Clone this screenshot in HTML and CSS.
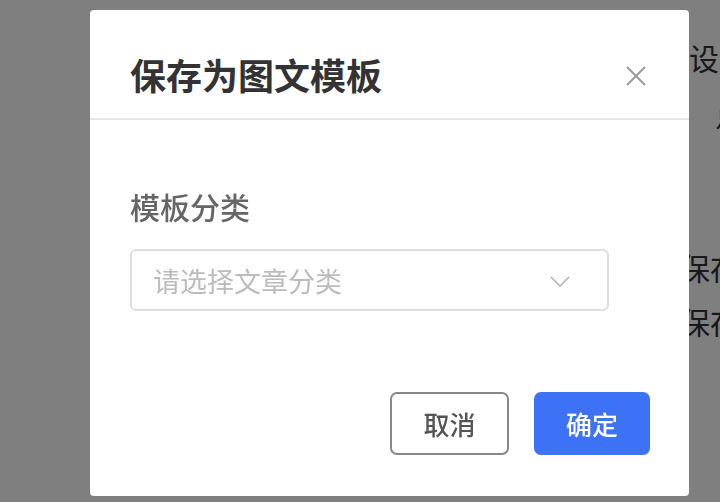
FILE: index.html
```html
<!DOCTYPE html>
<html lang="zh-CN">
<head>
    <meta charset="UTF-8">
    <meta name="viewport" content="width=device-width, initial-scale=1.0">
    <title>保存为图文模板</title>
    <link rel="stylesheet" href="styles.css">
</head>
<body>
    <div class="page">
        <div class="page-line line-1">基础设置</div>
        <div class="page-line line-2">点击</div>
        <div class="page-line line-3">保存</div>
        <div class="page-line line-4">保存</div>
    </div>

    <div class="mask"></div>

    <div class="dialog">
        <div class="dialog-header">
            <h2 class="dialog-title">保存为图文模板</h2>
            <span class="dialog-close">
                <svg width="20" height="20" viewBox="0 0 20 20">
                    <path d="M1 1 L19 19 M19 1 L1 19" stroke="#9a9a9a" stroke-width="2" fill="none"/>
                </svg>
            </span>
        </div>

        <div class="dialog-body">
            <div class="form-label">模板分类</div>
            <div class="select">
                <span class="select-placeholder">请选择文章分类</span>
                <svg class="select-arrow" width="20" height="11" viewBox="0 0 20 11">
                    <path d="M1 1 L10 10 L19 1" stroke="#b4b4b4" stroke-width="1.6" fill="none"/>
                </svg>
            </div>
        </div>

        <div class="dialog-footer">
            <button class="btn btn-cancel">取消</button>
            <button class="btn btn-primary">确定</button>
        </div>
    </div>
</body>
</html>
```

FILE: styles.css
```css
* {
    margin: 0;
    padding: 0;
    box-sizing: border-box;
    font-family: "Noto Sans CJK SC", "Noto Sans", sans-serif;
}

html, body {
    width: 720px;
    height: 502px;
    overflow: hidden;
}

body {
    background: #fff;
    color: #333;
}

/* page behind the dialog */
.page {
    padding-top: 42px;
}

.page-line {
    font-size: 30px;
    line-height: 30px;
    color: #333;
    white-space: nowrap;
}

.line-1 {
    margin-left: 629px;
}

.line-2 {
    margin-left: 715px;
    margin-top: 26px;
}

.line-3 {
    margin-left: 680px;
    margin-top: 124px;
}

.line-4 {
    margin-left: 680px;
    margin-top: 24px;
}

.mask {
    position: fixed;
    left: 0;
    top: 0;
    right: 0;
    bottom: 0;
    background: rgba(0, 0, 0, 0.5);
}

.dialog {
    position: fixed;
    left: 90px;
    top: 10px;
    width: 599px;
    height: 486px;
    background: #fff;
    border-radius: 4px;
    display: flex;
    flex-direction: column;
}

.dialog-header {
    display: flex;
    align-items: center;
    justify-content: space-between;
    padding: 46px 43px 26px 40px;
    border-bottom: 2px solid #e6e6e6;
}

.dialog-title {
    font-size: 36px;
    line-height: 36px;
    font-weight: bold;
    color: #333;
}

.dialog-close {
    display: flex;
    margin-top: 4px;
}

.dialog-body {
    padding: 71px 80px 0 40px;
}

.form-label {
    font-size: 30px;
    line-height: 30px;
    font-weight: 500;
    color: #666;
}

.select {
    margin-top: 28px;
    height: 62px;
    border: 2px solid #dedede;
    border-radius: 6px;
    display: flex;
    align-items: center;
    justify-content: space-between;
    padding: 0 37px 0 21px;
}

.select-placeholder {
    font-size: 27px;
    line-height: 27px;
    color: #bbb;
}

.select-arrow {
    margin-top: 2px;
}

.dialog-footer {
    display: flex;
    justify-content: flex-end;
    gap: 25px;
    padding: 81px 39px 0 0;
}

.btn {
    height: 63px;
    font-size: 26px;
    font-weight: 500;
    border-radius: 7px;
    cursor: pointer;
}

.btn-cancel {
    width: 119px;
    background: #fff;
    border: 2px solid #888;
    color: #555;
}

.btn-primary {
    width: 116px;
    background: #3d72f6;
    border: none;
    color: #fff;
}
```
